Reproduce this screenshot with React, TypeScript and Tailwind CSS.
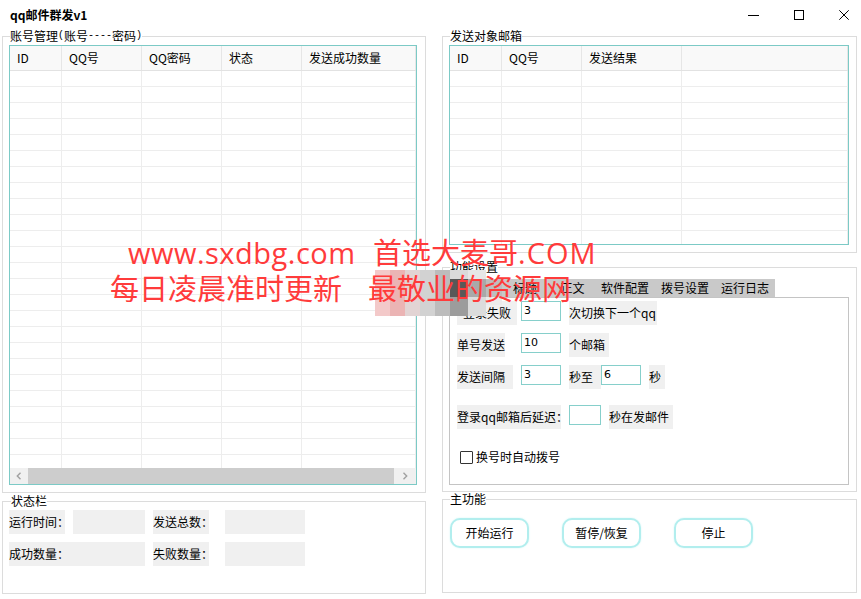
import React from "react";

type FsProps = { label: React.ReactNode; className: string; legendClass?: string; children?: React.ReactNode };

function Fieldset({ label, className, legendClass = "ml-[7px]", children }: FsProps) {
  return (
    <fieldset className={`border border-[#dcdcdc] ${className}`}>
      <legend className={`${legendClass} px-0 h-[14px] text-[12px] leading-[14px] text-black whitespace-nowrap`}>{label}</legend>
      {children}
    </fieldset>
  );
}

type GridProps = { cols: string[]; header: string[]; rows: number; className: string; scrollbar?: React.ReactNode };

function Grid({ cols, header, rows, className, scrollbar }: GridProps) {
  return (
    <div className={`border border-[#7ccac6] flex flex-col bg-white overflow-hidden ${className}`}>
      <div className="h-[25px] shrink-0 flex bg-[#f9f9f9] border-b border-[#e2e2e2]">
        {cols.map((c, i) => (
          <div key={i} className={`${c} h-full border-r border-[#e6e6e6] pl-[7px] flex items-center text-[12px] leading-[14px]`}>
            {header[i] ?? ""}
          </div>
        ))}
      </div>
      <div className="flex-1 overflow-hidden">
        {Array.from({ length: rows }).map((_, r) => (
          <div key={r} className="h-[16px] flex border-b border-[#ededed]">
            {cols.map((c, i) => (
              <div key={i} className={`${c} h-full border-r border-[#ededed]`} />
            ))}
          </div>
        ))}
      </div>
      {scrollbar}
    </div>
  );
}

function HScroll() {
  return (
    <div className="h-[16px] shrink-0 flex bg-[#f0f0f0]">
      <div className="w-[18px] h-full flex items-center justify-center">
        <svg width="6" height="8" viewBox="0 0 6 8">
          <path d="M4.5 0.8 L1.3 4 L4.5 7.2" stroke="#a0a0a0" strokeWidth="1.4" fill="none" />
        </svg>
      </div>
      <div className="flex-1 bg-[#cdcdcd]" />
      <div className="w-[22px] h-full flex items-center justify-center">
        <svg width="6" height="8" viewBox="0 0 6 8">
          <path d="M1.5 0.8 L4.7 4 L1.5 7.2" stroke="#a0a0a0" strokeWidth="1.4" fill="none" />
        </svg>
      </div>
    </div>
  );
}

function Lbl({ className, children }: { className: string; children?: React.ReactNode }) {
  return (
    <div className={`h-[24px] bg-[#f0f0f0] flex items-center text-[12px] leading-[14px] whitespace-nowrap ${className}`}>
      {children}
    </div>
  );
}

function Inp({ className, value = "" }: { className: string; value?: string }) {
  return (
    <div className={`h-[20px] border border-[#86cfcb] bg-white pl-[2px] flex items-center text-[11px] leading-[12px] font-['DejaVu_Sans',sans-serif] ${className}`}>
      {value}
    </div>
  );
}

function Btn({ label, className }: { label: string; className: string }) {
  return (
    <div
      className={`w-[79px] h-[30px] rounded-[10px] border-2 border-[#b2eeee] bg-white flex items-center justify-center text-[12px] leading-[14px] shadow-[0_0_2px_#d2f6f6] ${className}`}
    >
      {label}
    </div>
  );
}

export default function App() {
  const leftCols = ["w-[52px] shrink-0", "w-[80px] shrink-0", "w-[80px] shrink-0", "w-[80px] shrink-0", "flex-1"];
  const rightCols = ["w-[52px] shrink-0", "w-[80px] shrink-0", "w-[100px] shrink-0", "flex-1"];
  const mosaic: [number, number, number, number, string][] = [
    [375, 270, 15, 46, "#f3c9c9"],
    [390, 270, 15, 46, "#ebb4b4"],
    [405, 270, 15, 46, "#e2d4d4"],
    [420, 270, 15, 46, "#d2d2d2"],
    [435, 270, 15, 46, "#bcbcbc"],
    [450, 270, 18, 9, "#dadada"],
    [450, 279, 18, 18, "#585858"],
    [450, 297, 18, 19, "#9c9c9c"],
    [468, 270, 18, 9, "#e6e6e6"],
    [468, 279, 18, 18, "#a9a9a9"],
    [468, 297, 18, 19, "#dcdcdc"],
    [486, 279, 16, 18, "#bebebe"],
    [486, 297, 16, 8, "#ececec"],
  ];
  const wm = "absolute text-[29px] leading-[32px] text-[#ff3b3b] whitespace-nowrap font-['Open_Sans','Noto_Sans_CJK_SC',sans-serif]";
  const mono = "font-['Liberation_Mono',monospace] text-[10px] leading-[14px]";
  return (
    <div className="relative w-[861px] h-[599px] bg-white overflow-hidden text-black font-['Noto_Sans_CJK_SC',sans-serif]">
      {/* title bar */}
      <div className="h-[29px] flex items-center">
        <div className="ml-[10px] text-[12px] leading-[14px] font-bold">qq邮件群发v1</div>
        <div className="ml-auto mr-[12px] flex items-center">
          <svg width="11" height="10" viewBox="0 0 11 10">
            <path d="M0 5.5 H11" stroke="#000" strokeWidth="1" />
          </svg>
          <svg className="ml-[35px]" width="10" height="10" viewBox="0 0 10 10">
            <rect x="0.5" y="0.5" width="9" height="9" stroke="#000" strokeWidth="1" fill="none" />
          </svg>
          <svg className="ml-[35px]" width="10" height="10" viewBox="0 0 10 10">
            <path d="M0.3 0.3 L9.7 9.7 M9.7 0.3 L0.3 9.7" stroke="#000" strokeWidth="1" />
          </svg>
        </div>
      </div>

      <div className="flex">
        {/* left column */}
        <div className="ml-[2px] w-[424px] flex flex-col">
          <Fieldset
            label={
              <span className="flex items-center h-[14px]">
                账号管理<span className={mono}>(</span>账号<span className={mono}>----</span>密码<span className={mono}>)</span>
              </span>
            }
            className="h-[464px]"
          >
            <Grid
              cols={leftCols}
              header={["ID", "QQ号", "QQ密码", "状态", "发送成功数量"]}
              rows={26}
              className="mt-[2px] ml-[6px] w-[408px] h-[440px]"
              scrollbar={<HScroll />}
            />
          </Fieldset>
          <Fieldset label="状态栏" className="mt-[1px] h-[100px]" legendClass="ml-[8px]">
            <div className="ml-[6px] mt-[2px] flex">
              <Lbl className="w-[56px]">运行时间：</Lbl>
              <Lbl className="ml-[8px] w-[72px]" />
              <Lbl className="ml-[8px] w-[56px]">发送总数：</Lbl>
              <Lbl className="ml-[16px] w-[80px]" />
            </div>
            <div className="ml-[6px] mt-[8px] flex">
              <Lbl className="w-[136px]">成功数量：</Lbl>
              <Lbl className="ml-[8px] w-[56px]">失败数量：</Lbl>
              <Lbl className="ml-[16px] w-[80px]" />
            </div>
          </Fieldset>
        </div>

        {/* right column */}
        <div className="ml-[16px] w-[415px] flex flex-col">
          <Fieldset label="发送对象邮箱" className="h-[224px]">
            <Grid
              cols={rightCols}
              header={["ID", "QQ号", "发送结果", ""]}
              rows={12}
              className="mt-[2px] ml-[6px] w-[400px] h-[200px]"
            />
          </Fieldset>

          <Fieldset label="功能设置" className="mt-[7px] h-[232px]">
            <div className="mt-[5px] ml-[7px] w-[325px] h-[18px] bg-[#c9c9c9] flex text-[12px] leading-[14px]">
              <div className="w-[50px] flex items-center justify-center">登录设置</div>
              <div className="w-[50px] flex items-center justify-center">标题</div>
              <div className="w-[45px] flex items-center justify-center">正文</div>
              <div className="w-[60px] flex items-center justify-center">软件配置</div>
              <div className="w-[60px] flex items-center justify-center">拨号设置</div>
              <div className="w-[60px] flex items-center justify-center">运行日志</div>
            </div>
            <div className="ml-[6px] w-[400px] h-[188px] border border-[#c4c4c4] pl-[7px] pt-[3px]">
              <div className="flex items-start">
                <Lbl className="w-[60px] justify-center">登录失败</Lbl>
                <Inp className="ml-[4px] w-[40px]" value="3" />
                <Lbl className="ml-[8px] w-[88px]">次切换下一个qq</Lbl>
              </div>
              <div className="mt-[8px] flex items-start">
                <Lbl className="w-[48px]">单号发送</Lbl>
                <Inp className="ml-[16px] w-[40px]" value="10" />
                <Lbl className="ml-[8px] w-[40px]">个邮箱</Lbl>
              </div>
              <div className="mt-[8px] flex items-start">
                <Lbl className="w-[56px]">发送间隔</Lbl>
                <Inp className="ml-[8px] w-[40px]" value="3" />
                <Lbl className="ml-[8px] w-[32px]">秒至</Lbl>
                <Inp className="w-[40px]" value="6" />
                <Lbl className="ml-[8px] w-[16px]">秒</Lbl>
              </div>
              <div className="mt-[16px] flex items-start">
                <Lbl className="w-[104px]">登录qq邮箱后延迟：</Lbl>
                <Inp className="ml-[8px] w-[32px]" />
                <Lbl className="ml-[8px] w-[64px]">秒在发邮件</Lbl>
              </div>
              <div className="mt-[16px] h-[24px] flex items-center">
                <div className="ml-[3px] w-[13px] h-[13px] border border-[#333333] rounded-[1px] bg-white" />
                <div className="ml-[3px] text-[12px] leading-[14px]">换号时自动拨号</div>
              </div>
            </div>
          </Fieldset>

          <Fieldset label="主功能" className="h-[101px]">
            <div className="mt-[12px] ml-[7px] flex">
              <Btn label="开始运行" className="" />
              <Btn label="暂停/恢复" className="ml-[33px]" />
              <Btn label="停止" className="ml-[33px]" />
            </div>
          </Fieldset>
        </div>
      </div>

      {/* watermark overlay */}
      {mosaic.map(([x, y, w, h, c], i) => (
        <div key={i} className="absolute" style={{ left: x, top: y, width: w, height: h, background: c }} />
      ))}
      <div className={`${wm} left-[128px] top-[237px] tracking-[0.5px]`}>www.sxdbg.com</div>
      <div className={`${wm} left-[373px] top-[237px]`}>
        首选大麦哥<span className="tracking-[1px]">.COM</span>
      </div>
      <div className={`${wm} left-[110px] top-[273px]`}>每日凌晨准时更新</div>
      <div className={`${wm} left-[368px] top-[273px]`}>最敬业的资源网</div>
    </div>
  );
}
